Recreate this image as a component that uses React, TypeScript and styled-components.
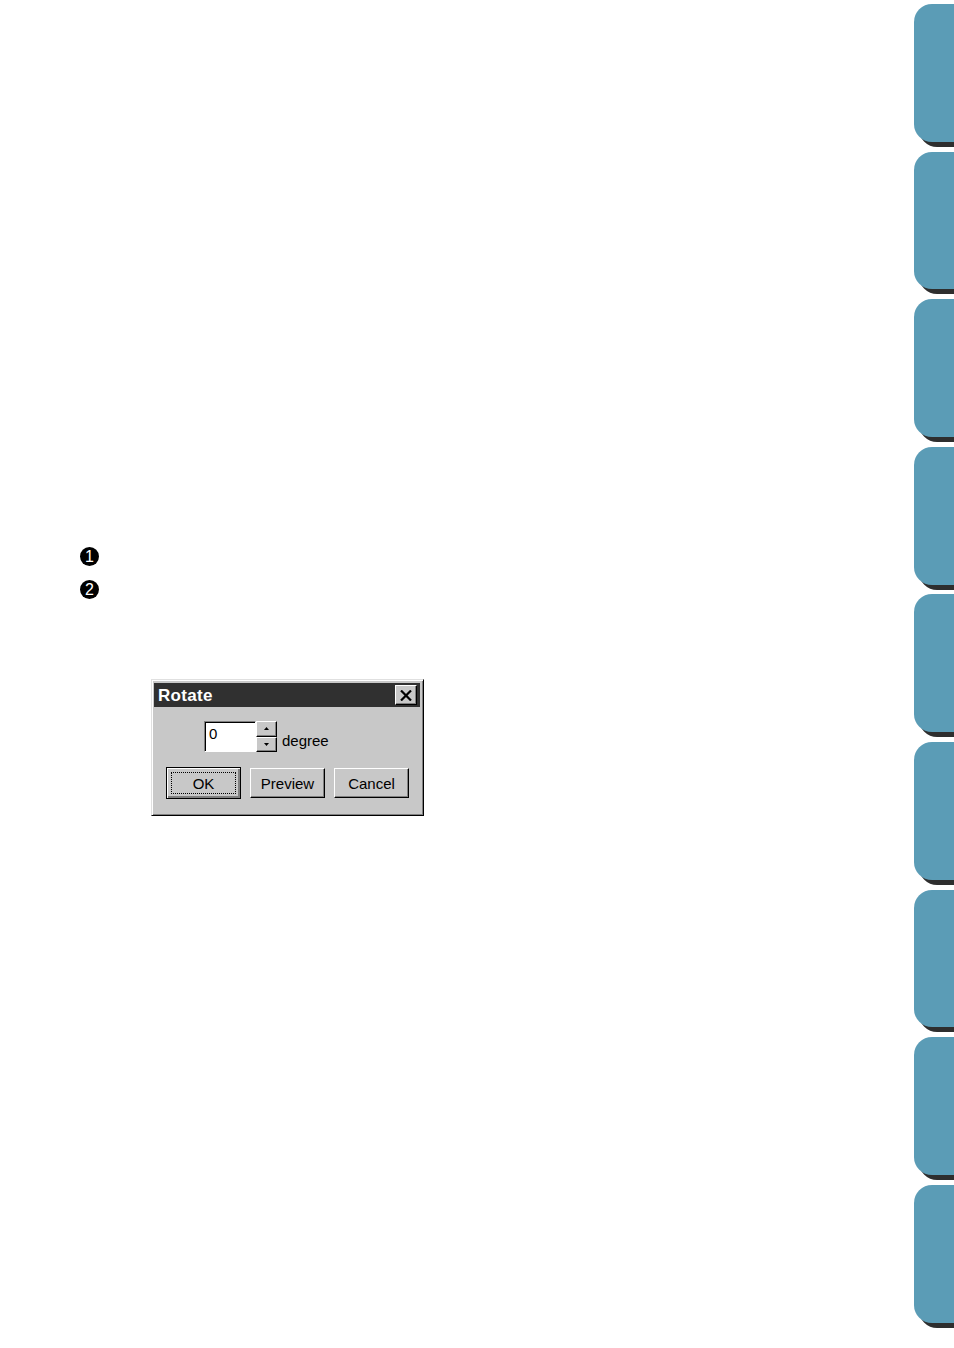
import React from 'react';
import styled, { createGlobalStyle } from 'styled-components';

const GlobalStyle = createGlobalStyle`
  html, body {
    margin: 0;
    padding: 0;
    background: #ffffff;
  }
  body {
    font-family: "Liberation Sans", Arial, sans-serif;
  }
`;

const Page = styled.div`
  display: flex;
  width: 954px;
  height: 1348px;
  overflow: hidden;
  background: #fff;
`;

const Main = styled.div`
  flex: 1;
  display: flex;
  flex-direction: column;
  padding: 547px 0 0 80px;
`;

const Steps = styled.div`
  display: flex;
  flex-direction: column;
  gap: 14px;
`;

const StepBadge = styled.div`
  width: 19px;
  height: 19px;
  border-radius: 50%;
  background: #000;
  color: #fff;
  font-size: 16px;
  font-weight: normal;
  display: flex;
  align-items: center;
  justify-content: center;
  line-height: 1;
`;

const Dialog = styled.div`
  margin: 80px 0 0 71px;
  width: 273px;
  height: 137px;
  box-sizing: border-box;
  background: #c8c8c8;
  border: 1px solid;
  border-color: #e0e0e0 #000 #000 #e0e0e0;
  box-shadow: inset 1px 1px 0 #fff, inset -1px -1px 0 #808080;
  padding: 3px 3px 0 2px;
  display: flex;
  flex-direction: column;
`;

const TitleBar = styled.div`
  height: 24px;
  background: #303030;
  display: flex;
  align-items: center;
  justify-content: space-between;
  padding: 0 3px 0 4px;
`;

const Title = styled.span`
  color: #fff;
  font-size: 17px;
  font-weight: bold;
  letter-spacing: 0.3px;
  margin-top: 2px;
`;

const CloseButton = styled.div`
  width: 22px;
  height: 20px;
  box-sizing: border-box;
  background: #c8c8c8;
  border: 1px solid;
  border-color: #fff #000 #000 #fff;
  box-shadow: inset -1px -1px 0 #808080;
  display: flex;
  align-items: center;
  justify-content: center;
`;

const InputRow = styled.div`
  display: flex;
  align-items: center;
  margin: 14px 0 0 50px;
  height: 31px;
`;

const NumberField = styled.div`
  width: 52px;
  height: 31px;
  box-sizing: border-box;
  background: #fff;
  border: 1px solid;
  border-color: #808080 #fff #fff #808080;
  box-shadow: inset 1px 1px 0 #000;
  font-size: 15px;
  padding: 3px 0 0 4px;
  color: #000;
`;

const Spinner = styled.div`
  display: flex;
  flex-direction: column;
  width: 21px;
  height: 31px;
`;

const SpinButton = styled.div`
  flex: 1;
  box-sizing: border-box;
  background: #c8c8c8;
  border: 1px solid;
  border-color: #fff #000 #000 #fff;
  box-shadow: inset -1px -1px 0 #808080;
  display: flex;
  align-items: center;
  justify-content: center;
`;

const Unit = styled.span`
  font-size: 15px;
  color: #000;
  margin: 7px 0 0 5px;
`;

const ButtonRow = styled.div`
  display: flex;
  gap: 9px;
  margin: 15px 0 0 12px;
  align-items: center;
`;

const Button = styled.div<{ $default?: boolean }>`
  width: 75px;
  height: ${p => (p.$default ? '32px' : '30px')};
  box-sizing: border-box;
  background: #c8c8c8;
  font-size: 15px;
  color: #000;
  display: flex;
  align-items: center;
  justify-content: center;
  position: relative;
  border: 1px solid #000;
  border-color: ${p => (p.$default ? '#000' : '#fff #000 #000 #fff')};
  box-shadow: ${p =>
    p.$default
      ? 'inset 1px 1px 0 #fff, inset -2px -2px 0 #808080, inset -1px -1px 0 #000'
      : 'inset -1px -1px 0 #808080'};
`;

const FocusRing = styled.span`
  position: absolute;
  inset: 4px;
  border: 1px dotted #000;
`;

const TabColumn = styled.div`
  width: 40px;
  display: flex;
  flex-direction: column;
  gap: 9.8px;
  padding-top: 4px;
`;

const Tab = styled.div`
  height: 137.8px;
  flex-shrink: 0;
  background: #5b9cb6;
  border-radius: 18px 0 0 18px;
  box-shadow: 5px 5px 0 #2e2e2e;
`;

const Triangle = ({ up }: { up?: boolean }) => (
  <svg width="5" height="3" viewBox="0 0 5 3">
    <polygon points={up ? '2.5,0 5,3 0,3' : '0,0 5,0 2.5,3'} fill="#000" />
  </svg>
);

export default function App() {
  return (
    <>
      <GlobalStyle />
      <Page>
        <Main>
          <Steps>
            <StepBadge>1</StepBadge>
            <StepBadge>2</StepBadge>
          </Steps>
          <Dialog>
            <TitleBar>
              <Title>Rotate</Title>
              <CloseButton>
                <svg width="12" height="11" viewBox="0 0 12 11">
                  <path d="M1 0.5 L11 10.5 M11 0.5 L1 10.5" stroke="#000" strokeWidth="2.2" />
                </svg>
              </CloseButton>
            </TitleBar>
            <InputRow>
              <NumberField>0</NumberField>
              <Spinner>
                <SpinButton>
                  <Triangle up />
                </SpinButton>
                <SpinButton>
                  <Triangle />
                </SpinButton>
              </Spinner>
              <Unit>degree</Unit>
            </InputRow>
            <ButtonRow>
              <Button $default>
                <FocusRing />
                OK
              </Button>
              <Button>Preview</Button>
              <Button>Cancel</Button>
            </ButtonRow>
          </Dialog>
        </Main>
        <TabColumn>
          {Array.from({ length: 9 }).map((_, i) => (
            <Tab key={i} />
          ))}
        </TabColumn>
      </Page>
    </>
  );
}
